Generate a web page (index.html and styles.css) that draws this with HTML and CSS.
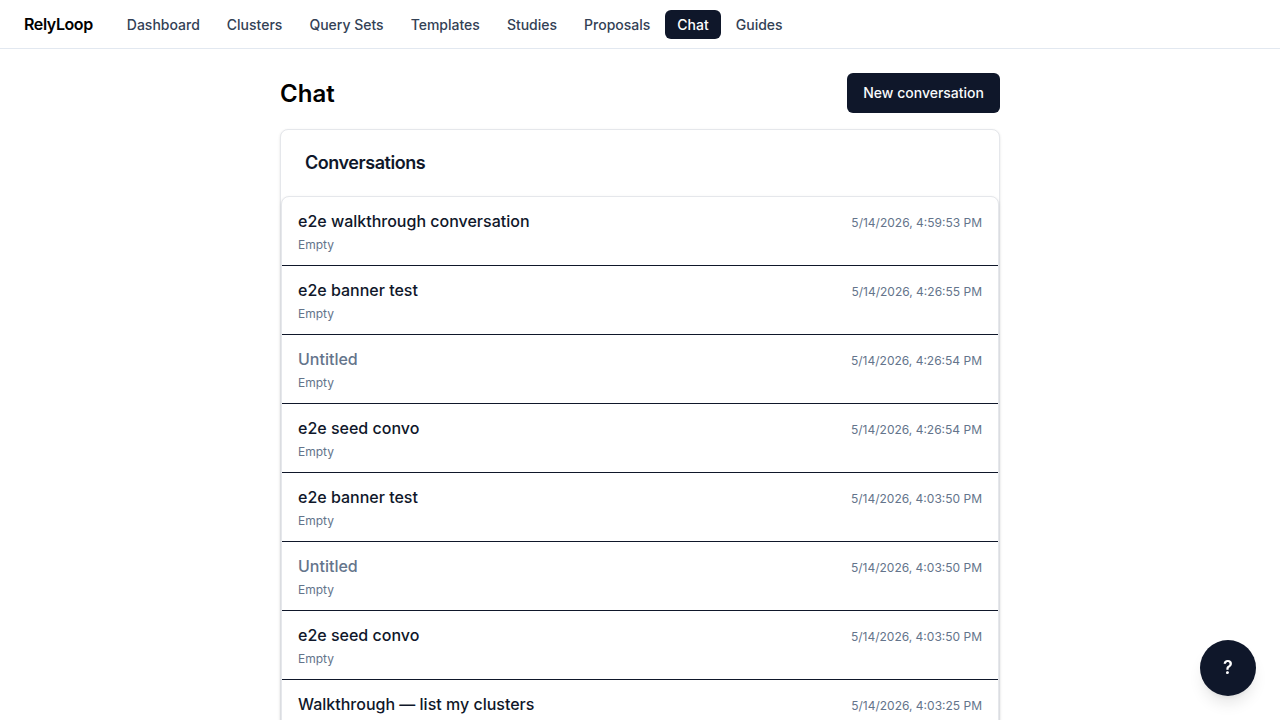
FILE: index.html
```html
<!DOCTYPE html>
<html lang="en">
<head>
  <meta charset="UTF-8">
  <meta name="viewport" content="width=device-width, initial-scale=1.0">
  <title>RelyLoop - Chat</title>
  <link rel="stylesheet" href="styles.css">
</head>
<body>
  <header class="navbar">
    <a class="brand" href="/">RelyLoop</a>
    <nav class="nav-links">
      <a href="/dashboard">Dashboard</a>
      <a href="/clusters">Clusters</a>
      <a href="/query-sets">Query Sets</a>
      <a href="/templates">Templates</a>
      <a href="/studies">Studies</a>
      <a href="/proposals">Proposals</a>
      <a class="active" href="/chat">Chat</a>
      <a href="/guides">Guides</a>
    </nav>
  </header>

  <main class="page">
    <div class="page-header">
      <h1>Chat</h1>
      <button class="new-button" type="button">New conversation</button>
    </div>

    <section class="card">
      <h2>Conversations</h2>
      <ul class="conversations">
        <li>
          <a class="conversation" href="/chat/1">
            <span class="title">e2e walkthrough conversation</span>
            <time>5/14/2026, 4:59:53 PM</time>
            <span class="preview">Empty</span>
          </a>
        </li>
        <li>
          <a class="conversation" href="/chat/2">
            <span class="title">e2e banner test</span>
            <time>5/14/2026, 4:26:55 PM</time>
            <span class="preview">Empty</span>
          </a>
        </li>
        <li>
          <a class="conversation" href="/chat/3">
            <span class="title untitled">Untitled</span>
            <time>5/14/2026, 4:26:54 PM</time>
            <span class="preview">Empty</span>
          </a>
        </li>
        <li>
          <a class="conversation" href="/chat/4">
            <span class="title">e2e seed convo</span>
            <time>5/14/2026, 4:26:54 PM</time>
            <span class="preview">Empty</span>
          </a>
        </li>
        <li>
          <a class="conversation" href="/chat/5">
            <span class="title">e2e banner test</span>
            <time>5/14/2026, 4:03:50 PM</time>
            <span class="preview">Empty</span>
          </a>
        </li>
        <li>
          <a class="conversation" href="/chat/6">
            <span class="title untitled">Untitled</span>
            <time>5/14/2026, 4:03:50 PM</time>
            <span class="preview">Empty</span>
          </a>
        </li>
        <li>
          <a class="conversation" href="/chat/7">
            <span class="title">e2e seed convo</span>
            <time>5/14/2026, 4:03:50 PM</time>
            <span class="preview">Empty</span>
          </a>
        </li>
        <li>
          <a class="conversation" href="/chat/8">
            <span class="title">Walkthrough — list my clusters</span>
            <time>5/14/2026, 4:03:25 PM</time>
            <span class="preview">Empty</span>
          </a>
        </li>
      </ul>
    </section>
  </main>

  <button class="help-button" type="button" aria-label="Help">?</button>
</body>
</html>
```
FILE: styles.css
```css
* {
  box-sizing: border-box;
}

body {
  margin: 0;
  font-family: Inter, sans-serif;
  font-size: 16px;
  line-height: 24px;
  color: #0f172a;
  background: #fff;
}

a {
  color: inherit;
  text-decoration: none;
}

h1, h2 {
  margin: 0;
  font-weight: 600;
}

/* Top navigation */
.navbar {
  display: flex;
  align-items: center;
  gap: 22px;
  padding: 10px 24px 9px;
  border-bottom: 1px solid #e2e8f0;
}

.brand {
  padding-bottom: 2px;
  font-weight: 600;
  letter-spacing: -0.025em;
  color: #000;
}

.nav-links {
  display: flex;
  gap: 3px;
}

.nav-links a {
  padding: 4px 12px;
  border-radius: 6px;
  font-size: 14px;
  font-weight: 500;
  line-height: 21px;
  color: #334155;
}

.nav-links .active {
  background: #0f172a;
  color: #fff;
}

/* Page */
.page {
  max-width: 768px;
  margin: 0 auto;
  padding: 24px;
}

.page-header {
  display: flex;
  align-items: center;
  justify-content: space-between;
  margin-bottom: 16px;
}

.page-header h1 {
  padding-top: 2px;
  font-size: 24px;
  line-height: 32px;
  color: #000;
}

.new-button {
  height: 40px;
  padding: 0 16px;
  border: none;
  border-radius: 6px;
  background: #0f172a;
  color: #f8fafc;
  font: 500 14px/20px Inter, sans-serif;
  cursor: pointer;
}

.card,
.conversations {
  border: 1px solid #e5e7eb;
  border-radius: 8px;
  background: #fff;
  box-shadow: 0 1px 3px rgba(0, 0, 0, 0.1), 0 1px 2px -1px rgba(0, 0, 0, 0.1);
}

.card h2 {
  padding: 24px;
  font-size: 18px;
  line-height: 18px;
  letter-spacing: -0.025em;
}

.conversations {
  margin: 0;
  padding: 0;
  list-style: none;
}

.conversations li + li {
  border-top: 1px solid #0f172a;
}

.conversation {
  display: grid;
  grid-template-columns: 1fr auto;
  align-items: baseline;
  row-gap: 4px;
  padding: 12px 16px;
}

.title {
  font-weight: 500;
}

.untitled,
.preview,
time {
  color: #64748b;
}

.preview,
time {
  font-size: 12px;
  line-height: 16px;
}

/* Floating help */
.help-button {
  position: fixed;
  right: 24px;
  bottom: 24px;
  width: 56px;
  height: 56px;
  border: none;
  border-radius: 50%;
  background: #0f172a;
  color: #fff;
  font: 600 18px/28px Inter, sans-serif;
  box-shadow: 0 10px 15px -3px rgba(0, 0, 0, 0.1), 0 4px 6px -4px rgba(0, 0, 0, 0.1);
  cursor: pointer;
}
```
